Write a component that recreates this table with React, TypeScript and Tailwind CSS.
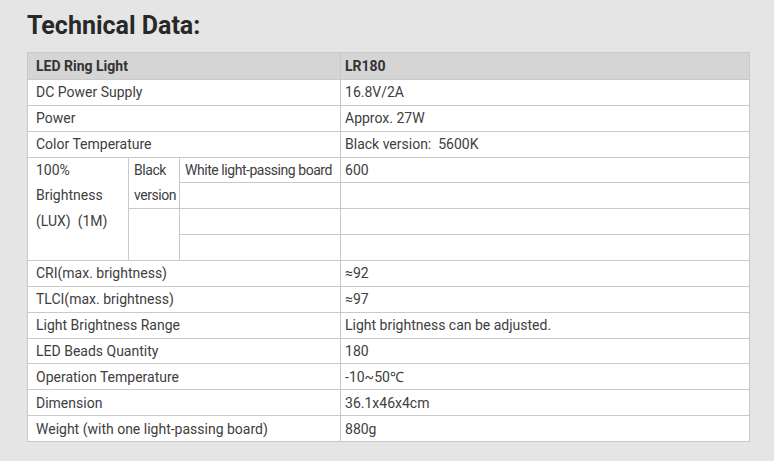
const rowsTop: [string, string][] = [
  ["DC Power Supply", "16.8V/2A"],
  ["Power", "Approx. 27W"],
  ["Color Temperature", "Black version:\u00a0\u00a05600K"],
];

const rowsBottom: [string, string][] = [
  ["CRI(max. brightness)", "≈92"],
  ["TLCI(max. brightness)", "≈97"],
  ["Light Brightness Range", "Light brightness can be adjusted."],
  ["LED Beads Quantity", "180"],
  ["Operation Temperature", "-10~50℃"],
  ["Dimension", "36.1x46x4cm"],
  ["Weight (with one light-passing board)", "880g"],
];

const cell = "border border-[#c9c9c9] align-middle";

function SimpleRow({ label, value }: { label: string; value: string }) {
  return (
    <tr className="h-[25.86px]">
      <td colSpan={3} className={`${cell} pl-2`}>
        {label}
      </td>
      <td className={`${cell} pl-1`}>{value}</td>
    </tr>
  );
}

export default function App() {
  return (
    <main
      className="min-h-[461px] w-[774px] bg-[#e5e5e5] pt-[12px] text-[#404040]"
      style={{ fontFamily: "Roboto, 'Liberation Sans', sans-serif" }}
    >
      <h1 className="ml-[27px] text-[25px] font-bold leading-[28px] text-[#282828]">Technical Data:</h1>
      <table className="mt-[12px] ml-[27px] w-[722px] table-fixed border-collapse bg-white text-[14px] leading-[18px]">
        <colgroup>
          <col className="w-[101px]" />
          <col className="w-[51px]" />
          <col className="w-[161px]" />
          <col className="w-[409px]" />
        </colgroup>
        <thead>
          <tr className="h-[27px] bg-[#d5d5d5] font-bold text-[#333]">
            <td colSpan={3} className={`${cell} pl-2`}>
              LED Ring Light
            </td>
            <td className={`${cell} pl-1`}>LR180</td>
          </tr>
        </thead>
        <tbody>
          {rowsTop.map(([l, v]) => (
            <SimpleRow key={l} label={l} value={v} />
          ))}
          <tr className="h-[25.86px]">
            <td rowSpan={4} className="border border-[#c9c9c9] pl-2 align-top leading-[25.5px]">
              100%
              <br />
              Brightness
              <br />
              (LUX)&nbsp;&nbsp;(1M)
            </td>
            <td rowSpan={2} className="border border-[#c9c9c9] pl-[5px] align-top tracking-[-0.45px] leading-[25px]">
              Black
              <br />
              version
            </td>
            <td className={`${cell} pl-[5px] tracking-[-0.45px]`}>White light-passing board</td>
            <td className={`${cell} pl-1`}>600</td>
          </tr>
          <tr className="h-[25.86px]">
            <td className={cell}></td>
            <td className={cell}></td>
          </tr>
          <tr className="h-[25.86px]">
            <td rowSpan={2} className={cell}></td>
            <td className={cell}></td>
            <td className={cell}></td>
          </tr>
          <tr className="h-[25.86px]">
            <td className={cell}></td>
            <td className={cell}></td>
          </tr>
          {rowsBottom.map(([l, v]) => (
            <SimpleRow key={l} label={l} value={v} />
          ))}
        </tbody>
      </table>
    </main>
  );
}
